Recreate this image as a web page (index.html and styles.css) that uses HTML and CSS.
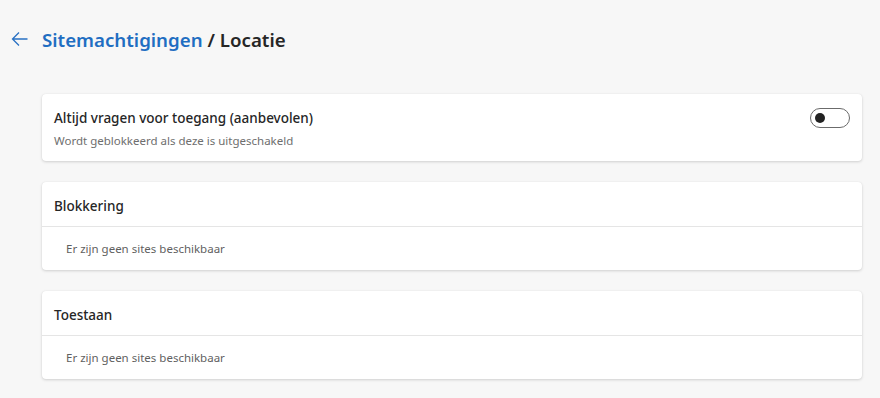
FILE: index.html
```html
<!DOCTYPE html>
<html lang="nl">
<head>
  <meta charset="UTF-8" />
  <title>Sitemachtigingen / Locatie</title>
  <link rel="stylesheet" href="styles.css">
</head>
<body>

  <div class="header">
    <span class="back">
      <svg width="18" height="16" viewBox="0 0 18 16">
        <path d="M8 1.5 L1.5 8 L8 14.5 M1.5 8 H16.5" fill="none" stroke="#2a72c4" stroke-width="1.3" />
      </svg>
    </span>
    <h1><span class="crumb">Sitemachtigingen</span> / Locatie</h1>
  </div>

  <div class="content">
    <!-- toegang vragen -->
    <div class="card setting">
      <div class="text">
        <div class="title">Altijd vragen voor toegang (aanbevolen)</div>
        <div class="desc">Wordt geblokkeerd als deze is uitgeschakeld</div>
      </div>
      <span class="toggle"><span class="knob"></span></span>
    </div>

    <div class="card">
      <div class="card-head">Blokkering</div>
      <div class="card-body">Er zijn geen sites beschikbaar</div>
    </div>

    <div class="card">
      <div class="card-head">Toestaan</div>
      <div class="card-body">Er zijn geen sites beschikbaar</div>
    </div>
  </div>

</body>
</html>
```

FILE: styles.css
```css
body {
  margin: 0;
  background: #f7f7f7;
  font-family: "Noto Sans", "Open Sans", sans-serif;
  color: #262626;
}
.header {
  display: flex;
  align-items: center;
  height: 78px;
  padding-left: 11px;
}
.back {
  display: flex;
  width: 31px;
}
h1 {
  margin: 0;
  font-size: 18.7px;
  font-weight: 600;
  color: #262626;
}
.crumb {
  color: #1f6ec2;
}
.content {
  width: 820px;
  margin-left: 42px;
  padding-top: 16px;
}
.card {
  background: #fff;
  border-radius: 4px;
  box-shadow: 0 1px 3px rgba(0, 0, 0, 0.16), 0 0 1px rgba(0, 0, 0, 0.08);
  margin-bottom: 21px;
}
.setting {
  display: flex;
  align-items: center;
  justify-content: space-between;
  height: 67px;
  padding: 0 12px;
}
.title {
  font-size: 13.5px;
  font-weight: 500;
  margin-bottom: 6px;
  margin-top: 2px;
}
.desc {
  font-size: 11.5px;
  color: #6e6e6e;
}
.toggle {
  width: 34px;
  height: 18px;
  border: 1px solid #6b6b6b;
  border-radius: 10px;
  display: flex;
  align-items: center;
  padding-left: 4px;
  margin-top: -19px;
}
.knob {
  width: 10px;
  height: 10px;
  border-radius: 50%;
  background: #222;
}
.card-head {
  height: 45px;
  display: flex;
  align-items: center;
  padding: 0 12px;
  padding-top: 3px;
  box-sizing: border-box;
  font-size: 13.5px;
  font-weight: 500;
  border-bottom: 1px solid #e5e5e5;
}
.card-body {
  height: 43px;
  display: flex;
  align-items: center;
  padding: 0 24px;
  font-size: 11.5px;
  color: #5f5f5f;
}
```
